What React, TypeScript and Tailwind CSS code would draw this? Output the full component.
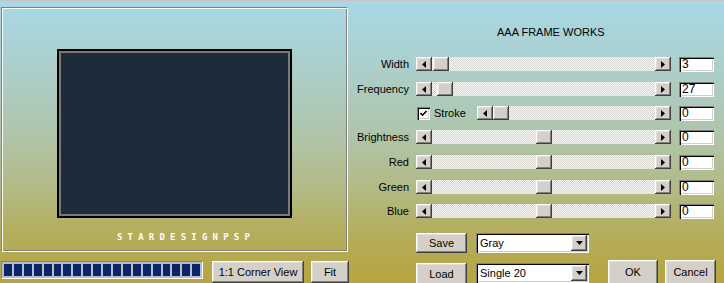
import React from "react";

const raised =
  "bg-[#d4d0c8] shadow-[inset_-1px_-1px_#404040,inset_1px_1px_#ffffff,inset_-2px_-2px_#808080,inset_2px_2px_#dfdfdf]";
const sunken =
  "bg-white shadow-[inset_1px_1px_#808080,inset_2px_2px_#000000,inset_-1px_-1px_#ffffff,inset_-2px_-2px_#d4d0c8]";

const Arrow: React.FC<{ dir: "left" | "right" | "down" }> = ({ dir }) => {
  if (dir === "down")
    return (
      <svg width="7" height="4" viewBox="0 0 7 4">
        <polygon points="0,0 7,0 3.5,4" fill="#000" />
      </svg>
    );
  return (
    <svg width="4" height="7" viewBox="0 0 4 7">
      <polygon points={dir === "left" ? "4,0 4,7 0,3.5" : "0,0 0,7 4,3.5"} fill="#000" />
    </svg>
  );
};

const ScrollBar: React.FC<{ width: string; thumb: string }> = ({ width, thumb }) => {
  return (
    <div className={`${width} h-[14px] flex`}>
      <div className={`${raised} w-[16px] h-full flex items-center justify-center`}>
        <Arrow dir="left" />
      </div>
      <div className="flex-1 h-full flex items-stretch bg-[image:repeating-conic-gradient(#d8d6d0_0%_25%,#f6f6f4_0%_50%)] bg-[length:2px_2px]">
        <div className={thumb} />
        <div className={`${raised} w-[16px] h-full`} />
      </div>
      <div className={`${raised} w-[16px] h-full flex items-center justify-center`}>
        <Arrow dir="right" />
      </div>
    </div>
  );
};

const NumBox: React.FC<{ value: string }> = ({ value }) => (
  <div className={`${sunken} w-[35px] h-[15px] pl-[3px] text-[12px] leading-[15px] text-black`}>{value}</div>
);

const rows = [
  { label: "Width", value: "3", thumb: "w-[1px]", mt: "mt-[18px]" },
  { label: "Frequency", value: "27", thumb: "w-[5px]", mt: "mt-[11px]" },
  { label: "Stroke", value: "0", thumb: "w-0", mt: "mt-[10px]" },
  { label: "Brightness", value: "0", thumb: "w-[104px]", mt: "mt-[10px]" },
  { label: "Red", value: "0", thumb: "w-[104px]", mt: "mt-[11px]" },
  { label: "Green", value: "0", thumb: "w-[104px]", mt: "mt-[11px]" },
  { label: "Blue", value: "0", thumb: "w-[104px]", mt: "mt-[10px]" },
];

export default function App() {
  return (
    <div className="w-[724px] h-[283px] overflow-hidden flex border-t border-[#c8c4c6] bg-[linear-gradient(180deg,#a8d8e6_0%,#abd0d0_20%,#afc6ae_45%,#b2bb88_65%,#b4ae5e_82%,#b6a43e_100%)] font-['Liberation_Sans',Arial,sans-serif] text-[11px] text-[#1a1a1a]">
      {/* left: preview */}
      <div className="w-[349px] pl-[1px] pt-[6px] flex flex-col">
        <div className="w-[347px] h-[253px] border-t border-l border-[#808080] border-r border-b border-r-white border-b-white shadow-[inset_1px_1px_#ffffff,inset_-1px_-1px_#808080] pt-[41px] pl-[55px]">
          <div className="w-[235px] h-[169px] border-2 border-black bg-[#1d2c3b] shadow-[inset_0_0_0_2px_#7a7a7a]" />
          <div className="mt-[15px] ml-[60px] font-['DejaVu_Sans_Mono',monospace] font-bold text-[9px] leading-[9px] tracking-[5.2px] text-white">
            STARDESIGNPSP
          </div>
        </div>
        <div className="mt-[9px] flex items-start">
          <div className="w-[202px] h-[18px] border-t border-l border-[#808080] border-r border-b border-r-white border-b-white bg-[#b8bccc] flex gap-[2px] p-[2px]">
            {Array.from({ length: 20 }).map((_, i) => (
              <div key={i} className="w-[8px] h-full bg-[#0c2468]" />
            ))}
          </div>
          <div className={`${raised} ml-[9px] w-[92px] h-[22px] pt-[3px] text-center text-black`}>1:1 Corner View</div>
          <div className={`${raised} ml-[7px] w-[38px] h-[22px] pt-[3px] text-center text-black`}>Fit</div>
        </div>
      </div>

      {/* right: controls */}
      <div className="flex-1 flex flex-col">
        <div className="mt-[25px] ml-[148px] leading-[13px] text-black">AAA FRAME WORKS</div>
        {rows.map((r) =>
          r.label === "Stroke" ? (
            <div key={r.label} className={`${r.mt} h-[14px] flex items-center`}>
              <div className={`${sunken} ml-[68px] w-[13px] h-[13px] flex items-center justify-center`}>
                <svg width="7" height="7" viewBox="0 0 7 7">
                  <path d="M0.5 3 L2.5 5.2 L6.5 1" stroke="#000" strokeWidth="1.6" fill="none" />
                </svg>
              </div>
              <div className="ml-[4px] w-[43px] text-black">Stroke</div>
              <ScrollBar width="w-[194px]" thumb={r.thumb} />
              <div className="ml-[8px]">
                <NumBox value={r.value} />
              </div>
            </div>
          ) : (
            <div key={r.label} className={`${r.mt} h-[14px] flex items-center`}>
              <div className="w-[60px] text-right text-black leading-[14px]">{r.label}</div>
              <div className="ml-[7px]">
                <ScrollBar width="w-[255px]" thumb={r.thumb} />
              </div>
              <div className="ml-[8px]">
                <NumBox value={r.value} />
              </div>
            </div>
          )
        )}
        <div className="mt-[15px] ml-[67px] flex">
          <div className={`${raised} w-[51px] h-[20px] flex items-center justify-center text-black`}>Save</div>
          <div className={`${sunken} ml-[9px] w-[113px] h-[20px] flex items-center pl-[4px] pr-[2px] text-black`}>
            <span className="flex-1">Gray</span>
            <div className={`${raised} w-[16px] h-[16px] flex items-center justify-center`}>
              <Arrow dir="down" />
            </div>
          </div>
        </div>
        <div className="mt-[7px] ml-[67px] flex items-start">
          <div className={`${raised} mt-[3px] w-[51px] h-[22px] flex items-center justify-center text-black`}>Load</div>
          <div className={`${sunken} mt-[3px] ml-[9px] w-[113px] h-[20px] flex items-center pl-[4px] pr-[2px] text-black`}>
            <span className="flex-1">Single 20</span>
            <div className={`${raised} w-[16px] h-[16px] flex items-center justify-center`}>
              <Arrow dir="down" />
            </div>
          </div>
          <div className={`${raised} ml-[19px] w-[50px] h-[25px] flex items-center justify-center text-black`}>OK</div>
          <div className={`${raised} ml-[7px] w-[51px] h-[25px] flex items-center justify-center text-black`}>Cancel</div>
        </div>
      </div>
    </div>
  );
}
